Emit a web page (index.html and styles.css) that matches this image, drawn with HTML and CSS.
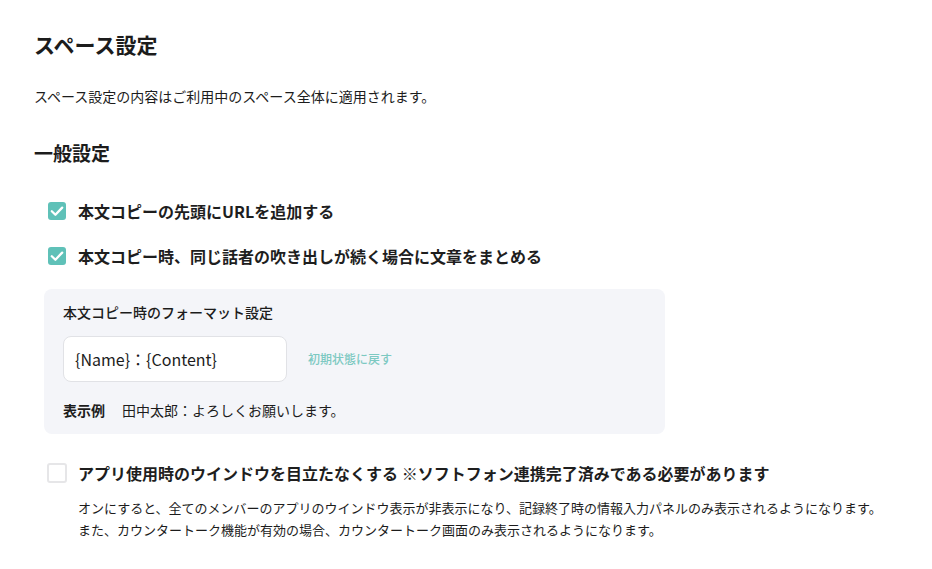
FILE: index.html
```html
<!DOCTYPE html>
<html lang="ja">
<head>
<meta charset="utf-8">
<title>スペース設定</title>
<link rel="stylesheet" href="styles.css">
</head>
<body>
<main class="page">
  <h1 class="title">スペース設定</h1>
  <p class="lead">スペース設定の内容はご利用中のスペース全体に適用されます。</p>
  <h2 class="section">一般設定</h2>

  <label class="check-row first">
    <span class="box checked"><svg viewBox="0 0 18 18" width="18" height="18"><polyline points="3.8,9.2 7.4,12.7 14.2,5.6" fill="none" stroke="#fff" stroke-width="2.3" stroke-linecap="round" stroke-linejoin="round"/></svg></span>
    <span class="label">本文コピーの先頭にURLを追加する</span>
  </label>

  <label class="check-row second">
    <span class="box checked"><svg viewBox="0 0 18 18" width="18" height="18"><polyline points="3.8,9.2 7.4,12.7 14.2,5.6" fill="none" stroke="#fff" stroke-width="2.3" stroke-linecap="round" stroke-linejoin="round"/></svg></span>
    <span class="label">本文コピー時、同じ話者の吹き出しが続く場合に文章をまとめる</span>
  </label>

  <section class="panel">
    <div class="panel-title">本文コピー時のフォーマット設定</div>
    <div class="input-row">
      <div class="input">{Name}：{Content}</div>
      <span class="reset">初期状態に戻す</span>
    </div>
    <div class="example">
      <span class="example-key">表示例</span>
      <span class="example-val">田中太郎：よろしくお願いします。</span>
    </div>
  </section>

  <label class="check-row third">
    <span class="box unchecked"></span>
    <span class="label">アプリ使用時のウインドウを目立たなくする ※ソフトフォン連携完了済みである必要があります</span>
  </label>
  <p class="note">オンにすると、全てのメンバーのアプリのウインドウ表示が非表示になり、記録終了時の情報入力パネルのみ表示されるようになります。<br>また、カウンタートーク機能が有効の場合、カウンタートーク画面のみ表示されるようになります。</p>
</main>
</body>
</html>
```

FILE: styles.css
```css
* { box-sizing: border-box; }
html, body { margin: 0; padding: 0; background: #fff; }
body {
  font-family: "Noto Sans CJK JP", "Noto Sans", sans-serif;
  color: #1c1c1c;
}
.page {
  padding: 30px 34px 0 34px;
}
.title {
  margin: 0;
  font-size: 21px;
  line-height: 28px;
  font-weight: 700;
}
.lead {
  margin: 28px 0 0 0;
  font-size: 14px;
  line-height: 20px;
}
.section {
  margin: 34px 0 0 0;
  font-size: 19px;
  line-height: 26px;
  font-weight: 700;
}
.check-row {
  display: flex;
  align-items: center;
  gap: 12px;
  height: 24px;
  padding-left: 14px;
}
.check-row.first { margin-top: 33px; }
.check-row.second { margin-top: 21px; }
.check-row.third { margin-top: 27px; }
.box {
  width: 18px;
  height: 18px;
  border-radius: 3px;
  flex: none;
  display: flex;
}
.box.checked { background: #5fc1b8; }
.box.unchecked {
  border: 2px solid #e6e6e8;
  background: #fff;
  width: 20px;
  height: 20px;
  margin-left: -1px;
  margin-right: -1px;
}
.label {
  font-size: 16px;
  line-height: 24px;
  font-weight: 700;
  color: #1e1e1e;
}
.panel {
  margin: 21px 0 0 10px;
  width: 621px;
  background: #f4f5f9;
  border-radius: 8px;
  padding: 13px 19px 14px 19px;
}
.panel-title {
  font-size: 14px;
  line-height: 20px;
  font-weight: 500;
}
.input-row {
  margin-top: 14px;
  display: flex;
  align-items: center;
  gap: 21px;
}
.input {
  width: 224px;
  height: 46px;
  background: #fff;
  border: 1px solid #e1e2e6;
  border-radius: 8px;
  padding: 0 11px;
  display: flex;
  align-items: center;
  font-size: 16px;
  color: #1c1c1c;
}
.reset {
  font-size: 12px;
  line-height: 18px;
  font-weight: 500;
  color: #7dc9c2;
}
.example {
  margin-top: 18px;
  display: flex;
  gap: 17px;
  font-size: 14px;
  line-height: 20px;
}
.example-key { font-weight: 700; }
.note {
  margin: 12px 0 0 44px;
  font-size: 13px;
  line-height: 22px;
}
```
